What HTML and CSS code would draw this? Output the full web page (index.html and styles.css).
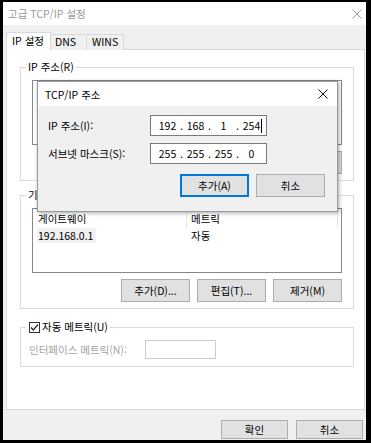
FILE: index.html
```html
<!DOCTYPE html>
<html lang="ko">
<head>
    <meta charset="UTF-8">
    <meta name="viewport" content="width=device-width, initial-scale=1.0">
    <title>고급 TCP/IP 설정</title>
    <link rel="stylesheet" href="styles.css">
</head>
<body>
    <div class="window">
        <div class="titlebar">
            <span class="title">고급 TCP/IP 설정</span>
            <svg class="close" width="10" height="10" viewBox="0 0 10 10"><path d="M0.5 0.5 L9.5 9.5 M9.5 0.5 L0.5 9.5" stroke="#9a9a9a" stroke-width="1"/></svg>
        </div>
        <div class="body">
            <div class="tabs">
                <div class="tab active">IP 설정</div>
                <div class="tab">DNS</div>
                <div class="tab">WINS</div>
            </div>
            <div class="panel">
                <fieldset class="group">
                    <legend>IP 주소(R)</legend>
                    <div class="listbox"></div>
                    <div class="btnrow">
                        <button class="btn">추가(A)...</button>
                        <button class="btn">편집(E)...</button>
                        <button class="btn">제거(V)</button>
                    </div>
                </fieldset>
                <fieldset class="group gw">
                    <legend>기본 게이트웨이(F):</legend>
                    <div class="listbox">
                        <div class="lv-head">
                            <span class="col1">게이트웨이</span>
                            <span class="col2">메트릭</span>
                        </div>
                        <div class="lv-row">
                            <span class="col1"><span class="sel">192.168.0.1</span></span>
                            <span class="col2">자동</span>
                        </div>
                    </div>
                    <div class="btnrow">
                        <button class="btn">추가(D)...</button>
                        <button class="btn">편집(T)...</button>
                        <button class="btn">제거(M)</button>
                    </div>
                </fieldset>
                <fieldset class="group metric">
                    <legend>
                        <span class="check">
                            <svg class="box" width="11" height="11" viewBox="0 0 11 11"><rect x="0.5" y="0.5" width="10" height="10" fill="#fff" stroke="#333"/><path d="M2 5.5 L4.3 8 L9 2.5" fill="none" stroke="#222" stroke-width="1.2"/></svg>
                            자동 메트릭(U)
                        </span>
                    </legend>
                    <div class="metric-row">
                        <span class="disabled">인터페이스 메트릭(N):</span>
                        <span class="textbox"></span>
                    </div>
                </fieldset>
            </div>
            <div class="footer">
                <button class="btn">확인</button>
                <button class="btn">취소</button>
            </div>
        </div>

        <div class="dialog">
            <div class="dlg-title">
                <span>TCP/IP 주소</span>
                <svg class="close" width="10" height="10" viewBox="0 0 10 10"><path d="M0.5 0.5 L9.5 9.5 M9.5 0.5 L0.5 9.5" stroke="#111" stroke-width="1"/></svg>
            </div>
            <div class="dlg-body">
                <div class="field">
                    <span class="label">IP 주소(I):</span>
                    <div class="ipbox">
                        <span class="oct">192</span><span class="dot">.</span><span class="oct">168</span><span class="dot">.</span><span class="oct">1</span><span class="dot">.</span><span class="oct">254</span><i class="caret"></i>
                    </div>
                </div>
                <div class="field">
                    <span class="label">서브넷 마스크(S):</span>
                    <div class="ipbox">
                        <span class="oct">255</span><span class="dot">.</span><span class="oct">255</span><span class="dot">.</span><span class="oct">255</span><span class="dot">.</span><span class="oct">0</span>
                    </div>
                </div>
                <div class="dlg-btns">
                    <button class="btn focus">추가(A)</button>
                    <button class="btn">취소</button>
                </div>
            </div>
        </div>
    </div>
</body>
</html>
```

FILE: styles.css
```css
* {
    box-sizing: border-box;
}
body {
    margin: 0;
    background: #000;
    font-family: "Noto Sans CJK KR", sans-serif;
    font-size: 10.5px;
    color: #000;
}
.window {
    position: relative;
    width: 363px;
    height: 438px;
    margin: 2px 0 0 3px;
    background: #f0f0f0;
}
.titlebar {
    height: 23px;
    background: #fff;
    display: flex;
    align-items: center;
    justify-content: space-between;
    padding: 0 4px 0 5px;
    color: #999;
}
.body {
    padding: 7px 1px 0 3px;
}
.tabs {
    display: flex;
    align-items: flex-end;
    height: 18px;
    margin-bottom: -1px;
    position: relative;
    z-index: 1;
}
.tab {
    height: 16px;
    line-height: 14px;
    padding: 0 0 0 4px;
    border: 1px solid #d9d9d9;
    border-bottom: none;
    margin-left: -1px;
    background: #f0f0f0;
    white-space: nowrap;
}
.tab:nth-child(2) { width: 37px; }
.tab:nth-child(3) { width: 38px; padding-left: 5px; }
.tab.active {
    height: 18px;
    width: 45px;
    margin-left: 0;
    background: #fff;
    padding-top: 1px;
    padding-left: 5px;
}
.panel {
    height: 361px;
    background: #fff;
    border: 1px solid #d9d9d9;
    padding: 10px 10px 0 13px;
}
.group {
    margin: 0;
    padding: 6px 11px 6px 11px;
    border: 1px solid #dcdcdc;
    display: flex;
    flex-direction: column;
    gap: 6px;
}
.group legend {
    height: 14px;
    line-height: 14px;
    padding: 0 2px;
    margin-left: -6px;
}
.group.gw {
    margin-top: 7px;
}
.group.metric {
    margin-top: 11px;
    padding-bottom: 7px;
}
.listbox {
    height: 65px;
    border: 1px solid #828790;
    background: #fff;
}
.lv-head, .lv-row {
    display: flex;
    height: 19px;
    line-height: 19px;
}
.lv-head .col1 {
    border-right: 1px solid #e5e5e5;
}
.lv-head .col2 {
    border-right: 1px solid #e5e5e5;
}
.col1 {
    width: 154px;
    padding-left: 5px;
}
.col2 {
    width: 151px;
    padding-left: 4px;
}
.lv-row {
    height: 16px;
    line-height: 15px;
}
.sel {
    display: inline-block;
    background: #f0f0f0;
    padding: 0 3px 0 1px;
    margin-left: -1px;
}
.btnrow {
    display: flex;
    justify-content: flex-end;
    gap: 7px;
}
.btn {
    font: inherit;
    color: #000;
    height: 23px;
    width: 69px;
    padding: 0;
    background: #e1e1e1;
    border: 1px solid #adadad;
}
.btn.focus {
    border: 2px solid #0078d7;
}
.check {
    display: inline-flex;
    align-items: center;
    gap: 2px;
    margin-left: 1px;
}
.metric-row {
    display: flex;
    align-items: center;
    height: 19px;
}
.disabled {
    color: #a3a3a3;
    width: 116px;
    margin-left: -3px;
}
.textbox {
    width: 71px;
    height: 19px;
    border: 1px solid #cccccc;
    background: #fff;
}
.footer {
    display: flex;
    justify-content: flex-end;
    gap: 8px;
    margin-top: 10px;
    padding-right: 2px;
}
.footer .btn {
    width: 67px;
    height: 19px;
}

/* 위에 떠 있는 대화 상자 */
.dialog {
    position: absolute;
    left: 34px;
    top: 79px;
    width: 301px;
    height: 131px;
    border: 1px solid #9a9a9a;
    background: #f0f0f0;
    box-shadow: 1px 1px 4px rgba(0, 0, 0, 0.35);
}
.dlg-title {
    height: 24px;
    background: #fff;
    display: flex;
    align-items: center;
    justify-content: space-between;
    padding: 0 9px 0 7px;
}
.dlg-body {
    padding: 9px 12px 0 10px;
}
.field {
    display: flex;
    align-items: center;
    height: 21px;
    margin-bottom: 7px;
}
.field .label {
    width: 102px;
}
.ipbox {
    display: flex;
    align-items: center;
    width: 117px;
    height: 21px;
    border: 1px solid #7a7a7a;
    background: #fff;
    padding-left: 5px;
}
.oct {
    width: 23px;
    text-align: center;
}
.dot {
    width: 5px;
    text-align: center;
}
.caret {
    width: 1px;
    height: 14px;
    margin-left: -2px;
    background: #000;
}
.dlg-btns {
    display: flex;
    justify-content: flex-end;
    gap: 7px;
    margin-top: 10px;
}
```
